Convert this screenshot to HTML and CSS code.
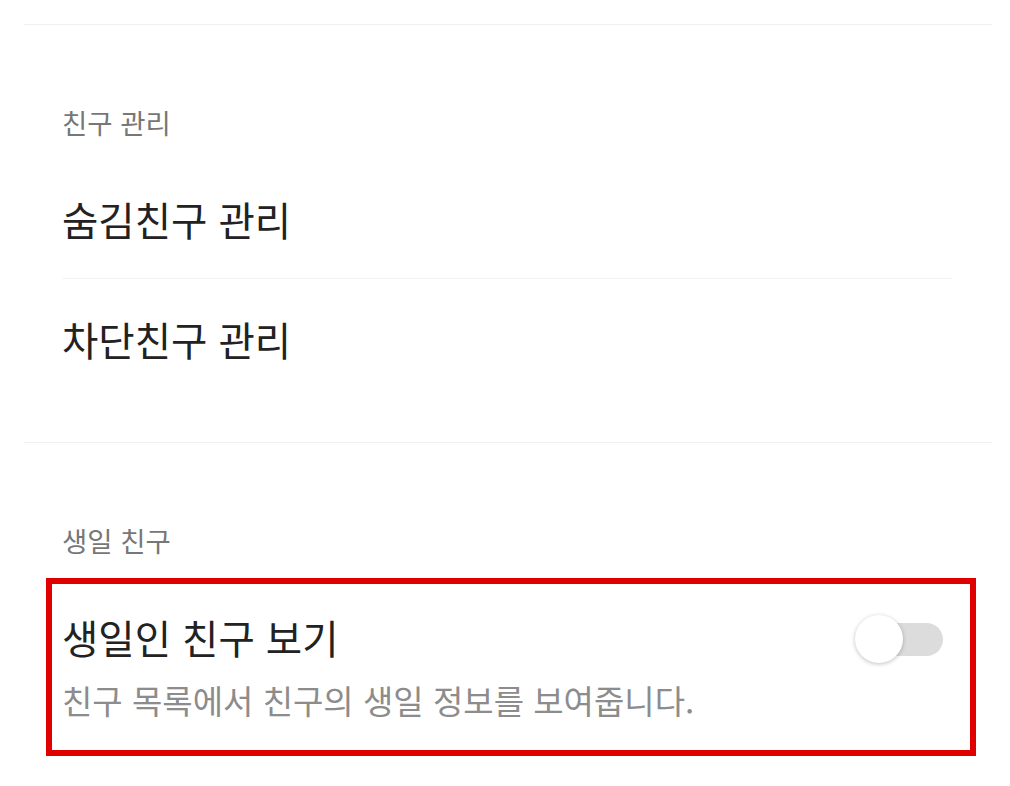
FILE: index.html
```html
<!DOCTYPE html>
<html lang="ko">
  <head>
    <meta charset="UTF-8" />
    <meta name="viewport" content="width=device-width, initial-scale=1" />
    <title>친구 설정</title>
    <link rel="stylesheet" href="styles.css">
  </head>
  <body>
    <div class="page">
      <hr class="section-line" />

      <section class="section">
        <h2 class="section-title">친구 관리</h2>
        <ul class="menu">
          <li class="menu-item">숨김친구 관리</li>
          <li class="menu-item">차단친구 관리</li>
        </ul>
      </section>

      <hr class="section-line" />

      <section class="section">
        <h2 class="section-title">생일 친구</h2>
        <div class="setting highlight">
          <div class="setting-text">
            <div class="setting-name">생일인 친구 보기</div>
            <div class="setting-desc">친구 목록에서 친구의 생일 정보를 보여줍니다.</div>
          </div>
          <button class="switch" aria-label="생일인 친구 보기"></button>
        </div>
      </section>
    </div>
  </body>
</html>
```

FILE: styles.css
```css
/* Reset */
* {
  margin: 0;
  padding: 0;
  box-sizing: border-box;
}
body,
html {
  height: 100%;
  background-color: #fff;
  font-family: "Noto Sans CJK KR", "Noto Sans", sans-serif;
  color: #222;
}

.page {
  padding-top: 24px;
}

/* Section dividers */
.section-line {
  border: none;
  border-top: 1px solid #efefef;
  margin: 0 18px 0 24px;
}

.section {
  padding: 77px 0 44px;
}

.section-title {
  margin-left: 62px;
  font-size: 27.5px;
  font-weight: 400;
  line-height: 40px;
  color: #777;
}

/* Menu list */
.menu {
  list-style: none;
  margin: 16px 58px 0 62px;
}
.menu-item {
  display: flex;
  align-items: center;
  height: 120px;
  font-size: 39.5px;
  font-weight: 400;
}
.menu-item + .menu-item {
  border-top: 1px solid #f3f3f3;
}

/* Toggle setting */
.setting {
  display: flex;
  align-items: flex-start;
  justify-content: space-between;
  margin: 18px 34px 0 46px;
  padding: 31px 27px 30px 10px;
}
.highlight {
  border: 6px solid #e00000;
}
.setting-name {
  font-size: 39.5px;
  line-height: 44px;
}
.setting-desc {
  margin-top: 21px;
  font-size: 33px;
  line-height: 40px;
  color: #8c8c8c;
}

.switch {
  position: relative;
  width: 88px;
  height: 48px;
  border: none;
  background: none;
  cursor: pointer;
}
.switch::before {
  content: "";
  position: absolute;
  right: 0;
  top: 8px;
  width: 73px;
  height: 33px;
  border-radius: 17px;
  background-color: #dcdcdc;
}
.switch::after {
  content: "";
  position: absolute;
  left: 0;
  top: 0;
  width: 48px;
  height: 48px;
  border-radius: 50%;
  background-color: #fff;
  box-shadow: 0 1px 4px rgba(0, 0, 0, 0.25);
}
```
